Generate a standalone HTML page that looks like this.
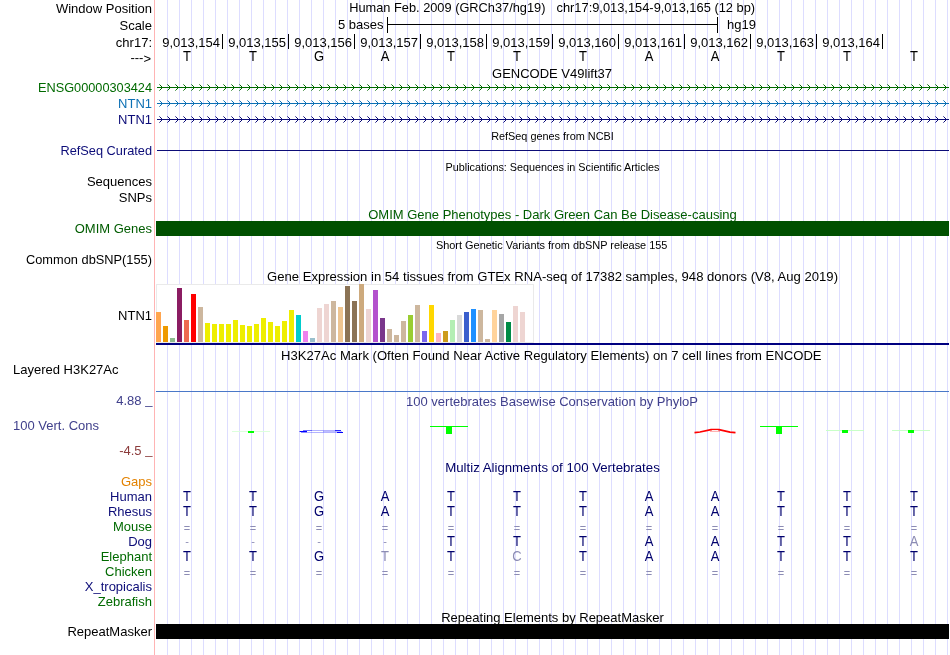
<!DOCTYPE html>
<html><head><meta charset="utf-8"><style>html,body{margin:0;padding:0;background:#fff;overflow:hidden}svg{display:block;will-change:transform}text{font-family:"Liberation Sans",sans-serif}</style></head>
<body><svg width="950" height="655" viewBox="0 0 950 655" font-family="Liberation Sans, sans-serif"><rect x="0" y="0" width="950" height="655" fill="#fff" />
<rect x="167" y="0" width="1" height="655" fill="#DDDDFF" />
<rect x="179" y="0" width="1" height="655" fill="#DDDDFF" />
<rect x="191" y="0" width="1" height="655" fill="#DDDDFF" />
<rect x="203" y="0" width="1" height="655" fill="#DDDDFF" />
<rect x="215" y="0" width="1" height="655" fill="#DDDDFF" />
<rect x="227" y="0" width="1" height="655" fill="#DDDDFF" />
<rect x="239" y="0" width="1" height="655" fill="#DDDDFF" />
<rect x="251" y="0" width="1" height="655" fill="#DDDDFF" />
<rect x="263" y="0" width="1" height="655" fill="#DDDDFF" />
<rect x="275" y="0" width="1" height="655" fill="#DDDDFF" />
<rect x="287" y="0" width="1" height="655" fill="#DDDDFF" />
<rect x="299" y="0" width="1" height="655" fill="#DDDDFF" />
<rect x="311" y="0" width="1" height="655" fill="#DDDDFF" />
<rect x="323" y="0" width="1" height="655" fill="#DDDDFF" />
<rect x="335" y="0" width="1" height="655" fill="#DDDDFF" />
<rect x="347" y="0" width="1" height="655" fill="#DDDDFF" />
<rect x="359" y="0" width="1" height="655" fill="#DDDDFF" />
<rect x="371" y="0" width="1" height="655" fill="#DDDDFF" />
<rect x="383" y="0" width="1" height="655" fill="#DDDDFF" />
<rect x="395" y="0" width="1" height="655" fill="#DDDDFF" />
<rect x="407" y="0" width="1" height="655" fill="#DDDDFF" />
<rect x="419" y="0" width="1" height="655" fill="#DDDDFF" />
<rect x="431" y="0" width="1" height="655" fill="#DDDDFF" />
<rect x="443" y="0" width="1" height="655" fill="#DDDDFF" />
<rect x="455" y="0" width="1" height="655" fill="#DDDDFF" />
<rect x="467" y="0" width="1" height="655" fill="#DDDDFF" />
<rect x="479" y="0" width="1" height="655" fill="#DDDDFF" />
<rect x="491" y="0" width="1" height="655" fill="#DDDDFF" />
<rect x="503" y="0" width="1" height="655" fill="#DDDDFF" />
<rect x="515" y="0" width="1" height="655" fill="#DDDDFF" />
<rect x="527" y="0" width="1" height="655" fill="#DDDDFF" />
<rect x="539" y="0" width="1" height="655" fill="#DDDDFF" />
<rect x="551" y="0" width="1" height="655" fill="#DDDDFF" />
<rect x="563" y="0" width="1" height="655" fill="#DDDDFF" />
<rect x="575" y="0" width="1" height="655" fill="#DDDDFF" />
<rect x="587" y="0" width="1" height="655" fill="#DDDDFF" />
<rect x="599" y="0" width="1" height="655" fill="#DDDDFF" />
<rect x="611" y="0" width="1" height="655" fill="#DDDDFF" />
<rect x="623" y="0" width="1" height="655" fill="#DDDDFF" />
<rect x="635" y="0" width="1" height="655" fill="#DDDDFF" />
<rect x="647" y="0" width="1" height="655" fill="#DDDDFF" />
<rect x="659" y="0" width="1" height="655" fill="#DDDDFF" />
<rect x="671" y="0" width="1" height="655" fill="#DDDDFF" />
<rect x="683" y="0" width="1" height="655" fill="#DDDDFF" />
<rect x="695" y="0" width="1" height="655" fill="#DDDDFF" />
<rect x="707" y="0" width="1" height="655" fill="#DDDDFF" />
<rect x="719" y="0" width="1" height="655" fill="#DDDDFF" />
<rect x="731" y="0" width="1" height="655" fill="#DDDDFF" />
<rect x="743" y="0" width="1" height="655" fill="#DDDDFF" />
<rect x="755" y="0" width="1" height="655" fill="#DDDDFF" />
<rect x="767" y="0" width="1" height="655" fill="#DDDDFF" />
<rect x="779" y="0" width="1" height="655" fill="#DDDDFF" />
<rect x="791" y="0" width="1" height="655" fill="#DDDDFF" />
<rect x="803" y="0" width="1" height="655" fill="#DDDDFF" />
<rect x="815" y="0" width="1" height="655" fill="#DDDDFF" />
<rect x="827" y="0" width="1" height="655" fill="#DDDDFF" />
<rect x="839" y="0" width="1" height="655" fill="#DDDDFF" />
<rect x="851" y="0" width="1" height="655" fill="#DDDDFF" />
<rect x="863" y="0" width="1" height="655" fill="#DDDDFF" />
<rect x="875" y="0" width="1" height="655" fill="#DDDDFF" />
<rect x="887" y="0" width="1" height="655" fill="#DDDDFF" />
<rect x="899" y="0" width="1" height="655" fill="#DDDDFF" />
<rect x="911" y="0" width="1" height="655" fill="#DDDDFF" />
<rect x="923" y="0" width="1" height="655" fill="#DDDDFF" />
<rect x="935" y="0" width="1" height="655" fill="#DDDDFF" />
<rect x="947" y="0" width="1" height="655" fill="#DDDDFF" />
<rect x="154" y="0" width="1" height="655" fill="#FFB4B4" />
<text x="152" y="13" font-size="13" fill="#000" text-anchor="end" >Window Position</text>
<text x="152" y="30" font-size="13" fill="#000" text-anchor="end" >Scale</text>
<text x="152" y="47" font-size="13" fill="#000" text-anchor="end" >chr17:</text>
<text x="151" y="62.5" font-size="13" text-anchor="end"><tspan dy="-1">---</tspan><tspan dy="1">&gt;</tspan></text>
<text x="349.2" y="12" font-size="13" fill="#000" text-anchor="start" textLength="196.3" lengthAdjust="spacingAndGlyphs" >Human Feb. 2009 (GRCh37/hg19)</text>
<text x="556.5" y="12" font-size="13" fill="#000" text-anchor="start" textLength="198.6" lengthAdjust="spacingAndGlyphs" >chr17:9,013,154-9,013,165 (12 bp)</text>
<text x="383.5" y="29" font-size="13" fill="#000" text-anchor="end" >5 bases</text>
<rect x="387" y="17" width="1" height="16" fill="#000" />
<rect x="717" y="17" width="1" height="16" fill="#000" />
<rect x="387" y="24" width="331" height="1" fill="#000" />
<text x="727" y="29" font-size="13" fill="#000" text-anchor="start" >hg19</text>
<rect x="222" y="34" width="1" height="15" fill="#000" />
<text x="220" y="47" font-size="13" fill="#000" text-anchor="end" >9,013,154</text>
<rect x="288" y="34" width="1" height="15" fill="#000" />
<text x="286" y="47" font-size="13" fill="#000" text-anchor="end" >9,013,155</text>
<rect x="354" y="34" width="1" height="15" fill="#000" />
<text x="352" y="47" font-size="13" fill="#000" text-anchor="end" >9,013,156</text>
<rect x="420" y="34" width="1" height="15" fill="#000" />
<text x="418" y="47" font-size="13" fill="#000" text-anchor="end" >9,013,157</text>
<rect x="486" y="34" width="1" height="15" fill="#000" />
<text x="484" y="47" font-size="13" fill="#000" text-anchor="end" >9,013,158</text>
<rect x="552" y="34" width="1" height="15" fill="#000" />
<text x="550" y="47" font-size="13" fill="#000" text-anchor="end" >9,013,159</text>
<rect x="618" y="34" width="1" height="15" fill="#000" />
<text x="616" y="47" font-size="13" fill="#000" text-anchor="end" >9,013,160</text>
<rect x="684" y="34" width="1" height="15" fill="#000" />
<text x="682" y="47" font-size="13" fill="#000" text-anchor="end" >9,013,161</text>
<rect x="750" y="34" width="1" height="15" fill="#000" />
<text x="748" y="47" font-size="13" fill="#000" text-anchor="end" >9,013,162</text>
<rect x="816" y="34" width="1" height="15" fill="#000" />
<text x="814" y="47" font-size="13" fill="#000" text-anchor="end" >9,013,163</text>
<rect x="882" y="34" width="1" height="15" fill="#000" />
<text x="880" y="47" font-size="13" fill="#000" text-anchor="end" >9,013,164</text>
<text x="187" y="61" font-size="13" fill="#000" text-anchor="middle" transform="matrix(1 0 0 1.08 0 -4.880)" >T</text>
<text x="253" y="61" font-size="13" fill="#000" text-anchor="middle" transform="matrix(1 0 0 1.08 0 -4.880)" >T</text>
<text x="319" y="61" font-size="13" fill="#000" text-anchor="middle" transform="matrix(1 0 0 1.08 0 -4.880)" >G</text>
<text x="385" y="61" font-size="13" fill="#000" text-anchor="middle" transform="matrix(1 0 0 1.08 0 -4.880)" >A</text>
<text x="451" y="61" font-size="13" fill="#000" text-anchor="middle" transform="matrix(1 0 0 1.08 0 -4.880)" >T</text>
<text x="517" y="61" font-size="13" fill="#000" text-anchor="middle" transform="matrix(1 0 0 1.08 0 -4.880)" >T</text>
<text x="583" y="61" font-size="13" fill="#000" text-anchor="middle" transform="matrix(1 0 0 1.08 0 -4.880)" >T</text>
<text x="649" y="61" font-size="13" fill="#000" text-anchor="middle" transform="matrix(1 0 0 1.08 0 -4.880)" >A</text>
<text x="715" y="61" font-size="13" fill="#000" text-anchor="middle" transform="matrix(1 0 0 1.08 0 -4.880)" >A</text>
<text x="781" y="61" font-size="13" fill="#000" text-anchor="middle" transform="matrix(1 0 0 1.08 0 -4.880)" >T</text>
<text x="847" y="61" font-size="13" fill="#000" text-anchor="middle" transform="matrix(1 0 0 1.08 0 -4.880)" >T</text>
<text x="914" y="61" font-size="13" fill="#000" text-anchor="middle" transform="matrix(1 0 0 1.08 0 -4.880)" >T</text>
<text x="552.0" y="78" font-size="13" fill="#000" text-anchor="middle" >GENCODE V49lift37</text>
<text x="152" y="92" font-size="13" fill="#006a00" text-anchor="end" textLength="114" lengthAdjust="spacingAndGlyphs" >ENSG00000303424</text>
<rect x="157" y="87" width="792" height="1" fill="#006a00" />
<path d="M160,85h1v1h-1zM161,86h1v3h-1zM160,89h1v1h-1zM168,85h1v1h-1zM169,86h1v3h-1zM168,89h1v1h-1zM176,85h1v1h-1zM177,86h1v3h-1zM176,89h1v1h-1zM184,85h1v1h-1zM185,86h1v3h-1zM184,89h1v1h-1zM192,85h1v1h-1zM193,86h1v3h-1zM192,89h1v1h-1zM200,85h1v1h-1zM201,86h1v3h-1zM200,89h1v1h-1zM208,85h1v1h-1zM209,86h1v3h-1zM208,89h1v1h-1zM216,85h1v1h-1zM217,86h1v3h-1zM216,89h1v1h-1zM224,85h1v1h-1zM225,86h1v3h-1zM224,89h1v1h-1zM232,85h1v1h-1zM233,86h1v3h-1zM232,89h1v1h-1zM240,85h1v1h-1zM241,86h1v3h-1zM240,89h1v1h-1zM248,85h1v1h-1zM249,86h1v3h-1zM248,89h1v1h-1zM256,85h1v1h-1zM257,86h1v3h-1zM256,89h1v1h-1zM264,85h1v1h-1zM265,86h1v3h-1zM264,89h1v1h-1zM272,85h1v1h-1zM273,86h1v3h-1zM272,89h1v1h-1zM280,85h1v1h-1zM281,86h1v3h-1zM280,89h1v1h-1zM288,85h1v1h-1zM289,86h1v3h-1zM288,89h1v1h-1zM296,85h1v1h-1zM297,86h1v3h-1zM296,89h1v1h-1zM304,85h1v1h-1zM305,86h1v3h-1zM304,89h1v1h-1zM312,85h1v1h-1zM313,86h1v3h-1zM312,89h1v1h-1zM320,85h1v1h-1zM321,86h1v3h-1zM320,89h1v1h-1zM328,85h1v1h-1zM329,86h1v3h-1zM328,89h1v1h-1zM336,85h1v1h-1zM337,86h1v3h-1zM336,89h1v1h-1zM344,85h1v1h-1zM345,86h1v3h-1zM344,89h1v1h-1zM352,85h1v1h-1zM353,86h1v3h-1zM352,89h1v1h-1zM360,85h1v1h-1zM361,86h1v3h-1zM360,89h1v1h-1zM368,85h1v1h-1zM369,86h1v3h-1zM368,89h1v1h-1zM376,85h1v1h-1zM377,86h1v3h-1zM376,89h1v1h-1zM384,85h1v1h-1zM385,86h1v3h-1zM384,89h1v1h-1zM392,85h1v1h-1zM393,86h1v3h-1zM392,89h1v1h-1zM400,85h1v1h-1zM401,86h1v3h-1zM400,89h1v1h-1zM408,85h1v1h-1zM409,86h1v3h-1zM408,89h1v1h-1zM416,85h1v1h-1zM417,86h1v3h-1zM416,89h1v1h-1zM424,85h1v1h-1zM425,86h1v3h-1zM424,89h1v1h-1zM432,85h1v1h-1zM433,86h1v3h-1zM432,89h1v1h-1zM440,85h1v1h-1zM441,86h1v3h-1zM440,89h1v1h-1zM448,85h1v1h-1zM449,86h1v3h-1zM448,89h1v1h-1zM456,85h1v1h-1zM457,86h1v3h-1zM456,89h1v1h-1zM464,85h1v1h-1zM465,86h1v3h-1zM464,89h1v1h-1zM472,85h1v1h-1zM473,86h1v3h-1zM472,89h1v1h-1zM480,85h1v1h-1zM481,86h1v3h-1zM480,89h1v1h-1zM488,85h1v1h-1zM489,86h1v3h-1zM488,89h1v1h-1zM496,85h1v1h-1zM497,86h1v3h-1zM496,89h1v1h-1zM504,85h1v1h-1zM505,86h1v3h-1zM504,89h1v1h-1zM512,85h1v1h-1zM513,86h1v3h-1zM512,89h1v1h-1zM520,85h1v1h-1zM521,86h1v3h-1zM520,89h1v1h-1zM528,85h1v1h-1zM529,86h1v3h-1zM528,89h1v1h-1zM536,85h1v1h-1zM537,86h1v3h-1zM536,89h1v1h-1zM544,85h1v1h-1zM545,86h1v3h-1zM544,89h1v1h-1zM552,85h1v1h-1zM553,86h1v3h-1zM552,89h1v1h-1zM560,85h1v1h-1zM561,86h1v3h-1zM560,89h1v1h-1zM568,85h1v1h-1zM569,86h1v3h-1zM568,89h1v1h-1zM576,85h1v1h-1zM577,86h1v3h-1zM576,89h1v1h-1zM584,85h1v1h-1zM585,86h1v3h-1zM584,89h1v1h-1zM592,85h1v1h-1zM593,86h1v3h-1zM592,89h1v1h-1zM600,85h1v1h-1zM601,86h1v3h-1zM600,89h1v1h-1zM608,85h1v1h-1zM609,86h1v3h-1zM608,89h1v1h-1zM616,85h1v1h-1zM617,86h1v3h-1zM616,89h1v1h-1zM624,85h1v1h-1zM625,86h1v3h-1zM624,89h1v1h-1zM632,85h1v1h-1zM633,86h1v3h-1zM632,89h1v1h-1zM640,85h1v1h-1zM641,86h1v3h-1zM640,89h1v1h-1zM648,85h1v1h-1zM649,86h1v3h-1zM648,89h1v1h-1zM656,85h1v1h-1zM657,86h1v3h-1zM656,89h1v1h-1zM664,85h1v1h-1zM665,86h1v3h-1zM664,89h1v1h-1zM672,85h1v1h-1zM673,86h1v3h-1zM672,89h1v1h-1zM680,85h1v1h-1zM681,86h1v3h-1zM680,89h1v1h-1zM688,85h1v1h-1zM689,86h1v3h-1zM688,89h1v1h-1zM696,85h1v1h-1zM697,86h1v3h-1zM696,89h1v1h-1zM704,85h1v1h-1zM705,86h1v3h-1zM704,89h1v1h-1zM712,85h1v1h-1zM713,86h1v3h-1zM712,89h1v1h-1zM720,85h1v1h-1zM721,86h1v3h-1zM720,89h1v1h-1zM728,85h1v1h-1zM729,86h1v3h-1zM728,89h1v1h-1zM736,85h1v1h-1zM737,86h1v3h-1zM736,89h1v1h-1zM744,85h1v1h-1zM745,86h1v3h-1zM744,89h1v1h-1zM752,85h1v1h-1zM753,86h1v3h-1zM752,89h1v1h-1zM760,85h1v1h-1zM761,86h1v3h-1zM760,89h1v1h-1zM768,85h1v1h-1zM769,86h1v3h-1zM768,89h1v1h-1zM776,85h1v1h-1zM777,86h1v3h-1zM776,89h1v1h-1zM784,85h1v1h-1zM785,86h1v3h-1zM784,89h1v1h-1zM792,85h1v1h-1zM793,86h1v3h-1zM792,89h1v1h-1zM800,85h1v1h-1zM801,86h1v3h-1zM800,89h1v1h-1zM808,85h1v1h-1zM809,86h1v3h-1zM808,89h1v1h-1zM816,85h1v1h-1zM817,86h1v3h-1zM816,89h1v1h-1zM824,85h1v1h-1zM825,86h1v3h-1zM824,89h1v1h-1zM832,85h1v1h-1zM833,86h1v3h-1zM832,89h1v1h-1zM840,85h1v1h-1zM841,86h1v3h-1zM840,89h1v1h-1zM848,85h1v1h-1zM849,86h1v3h-1zM848,89h1v1h-1zM856,85h1v1h-1zM857,86h1v3h-1zM856,89h1v1h-1zM864,85h1v1h-1zM865,86h1v3h-1zM864,89h1v1h-1zM872,85h1v1h-1zM873,86h1v3h-1zM872,89h1v1h-1zM880,85h1v1h-1zM881,86h1v3h-1zM880,89h1v1h-1zM888,85h1v1h-1zM889,86h1v3h-1zM888,89h1v1h-1zM896,85h1v1h-1zM897,86h1v3h-1zM896,89h1v1h-1zM904,85h1v1h-1zM905,86h1v3h-1zM904,89h1v1h-1zM912,85h1v1h-1zM913,86h1v3h-1zM912,89h1v1h-1zM920,85h1v1h-1zM921,86h1v3h-1zM920,89h1v1h-1zM928,85h1v1h-1zM929,86h1v3h-1zM928,89h1v1h-1zM936,85h1v1h-1zM937,86h1v3h-1zM936,89h1v1h-1zM944,85h1v1h-1zM945,86h1v3h-1zM944,89h1v1h-1z" fill="#006a00"/>
<path d="M159,84h1v1h-1zM159,90h1v1h-1zM167,84h1v1h-1zM167,90h1v1h-1zM175,84h1v1h-1zM175,90h1v1h-1zM183,84h1v1h-1zM183,90h1v1h-1zM191,84h1v1h-1zM191,90h1v1h-1zM199,84h1v1h-1zM199,90h1v1h-1zM207,84h1v1h-1zM207,90h1v1h-1zM215,84h1v1h-1zM215,90h1v1h-1zM223,84h1v1h-1zM223,90h1v1h-1zM231,84h1v1h-1zM231,90h1v1h-1zM239,84h1v1h-1zM239,90h1v1h-1zM247,84h1v1h-1zM247,90h1v1h-1zM255,84h1v1h-1zM255,90h1v1h-1zM263,84h1v1h-1zM263,90h1v1h-1zM271,84h1v1h-1zM271,90h1v1h-1zM279,84h1v1h-1zM279,90h1v1h-1zM287,84h1v1h-1zM287,90h1v1h-1zM295,84h1v1h-1zM295,90h1v1h-1zM303,84h1v1h-1zM303,90h1v1h-1zM311,84h1v1h-1zM311,90h1v1h-1zM319,84h1v1h-1zM319,90h1v1h-1zM327,84h1v1h-1zM327,90h1v1h-1zM335,84h1v1h-1zM335,90h1v1h-1zM343,84h1v1h-1zM343,90h1v1h-1zM351,84h1v1h-1zM351,90h1v1h-1zM359,84h1v1h-1zM359,90h1v1h-1zM367,84h1v1h-1zM367,90h1v1h-1zM375,84h1v1h-1zM375,90h1v1h-1zM383,84h1v1h-1zM383,90h1v1h-1zM391,84h1v1h-1zM391,90h1v1h-1zM399,84h1v1h-1zM399,90h1v1h-1zM407,84h1v1h-1zM407,90h1v1h-1zM415,84h1v1h-1zM415,90h1v1h-1zM423,84h1v1h-1zM423,90h1v1h-1zM431,84h1v1h-1zM431,90h1v1h-1zM439,84h1v1h-1zM439,90h1v1h-1zM447,84h1v1h-1zM447,90h1v1h-1zM455,84h1v1h-1zM455,90h1v1h-1zM463,84h1v1h-1zM463,90h1v1h-1zM471,84h1v1h-1zM471,90h1v1h-1zM479,84h1v1h-1zM479,90h1v1h-1zM487,84h1v1h-1zM487,90h1v1h-1zM495,84h1v1h-1zM495,90h1v1h-1zM503,84h1v1h-1zM503,90h1v1h-1zM511,84h1v1h-1zM511,90h1v1h-1zM519,84h1v1h-1zM519,90h1v1h-1zM527,84h1v1h-1zM527,90h1v1h-1zM535,84h1v1h-1zM535,90h1v1h-1zM543,84h1v1h-1zM543,90h1v1h-1zM551,84h1v1h-1zM551,90h1v1h-1zM559,84h1v1h-1zM559,90h1v1h-1zM567,84h1v1h-1zM567,90h1v1h-1zM575,84h1v1h-1zM575,90h1v1h-1zM583,84h1v1h-1zM583,90h1v1h-1zM591,84h1v1h-1zM591,90h1v1h-1zM599,84h1v1h-1zM599,90h1v1h-1zM607,84h1v1h-1zM607,90h1v1h-1zM615,84h1v1h-1zM615,90h1v1h-1zM623,84h1v1h-1zM623,90h1v1h-1zM631,84h1v1h-1zM631,90h1v1h-1zM639,84h1v1h-1zM639,90h1v1h-1zM647,84h1v1h-1zM647,90h1v1h-1zM655,84h1v1h-1zM655,90h1v1h-1zM663,84h1v1h-1zM663,90h1v1h-1zM671,84h1v1h-1zM671,90h1v1h-1zM679,84h1v1h-1zM679,90h1v1h-1zM687,84h1v1h-1zM687,90h1v1h-1zM695,84h1v1h-1zM695,90h1v1h-1zM703,84h1v1h-1zM703,90h1v1h-1zM711,84h1v1h-1zM711,90h1v1h-1zM719,84h1v1h-1zM719,90h1v1h-1zM727,84h1v1h-1zM727,90h1v1h-1zM735,84h1v1h-1zM735,90h1v1h-1zM743,84h1v1h-1zM743,90h1v1h-1zM751,84h1v1h-1zM751,90h1v1h-1zM759,84h1v1h-1zM759,90h1v1h-1zM767,84h1v1h-1zM767,90h1v1h-1zM775,84h1v1h-1zM775,90h1v1h-1zM783,84h1v1h-1zM783,90h1v1h-1zM791,84h1v1h-1zM791,90h1v1h-1zM799,84h1v1h-1zM799,90h1v1h-1zM807,84h1v1h-1zM807,90h1v1h-1zM815,84h1v1h-1zM815,90h1v1h-1zM823,84h1v1h-1zM823,90h1v1h-1zM831,84h1v1h-1zM831,90h1v1h-1zM839,84h1v1h-1zM839,90h1v1h-1zM847,84h1v1h-1zM847,90h1v1h-1zM855,84h1v1h-1zM855,90h1v1h-1zM863,84h1v1h-1zM863,90h1v1h-1zM871,84h1v1h-1zM871,90h1v1h-1zM879,84h1v1h-1zM879,90h1v1h-1zM887,84h1v1h-1zM887,90h1v1h-1zM895,84h1v1h-1zM895,90h1v1h-1zM903,84h1v1h-1zM903,90h1v1h-1zM911,84h1v1h-1zM911,90h1v1h-1zM919,84h1v1h-1zM919,90h1v1h-1zM927,84h1v1h-1zM927,90h1v1h-1zM935,84h1v1h-1zM935,90h1v1h-1zM943,84h1v1h-1zM943,90h1v1h-1z" fill="#006a00" opacity="0.6"/>
<text x="152" y="108" font-size="13" fill="#0c70b4" text-anchor="end" >NTN1</text>
<rect x="157" y="103" width="792" height="1" fill="#0c70b4" />
<path d="M160,101h1v1h-1zM161,102h1v3h-1zM160,105h1v1h-1zM168,101h1v1h-1zM169,102h1v3h-1zM168,105h1v1h-1zM176,101h1v1h-1zM177,102h1v3h-1zM176,105h1v1h-1zM184,101h1v1h-1zM185,102h1v3h-1zM184,105h1v1h-1zM192,101h1v1h-1zM193,102h1v3h-1zM192,105h1v1h-1zM200,101h1v1h-1zM201,102h1v3h-1zM200,105h1v1h-1zM208,101h1v1h-1zM209,102h1v3h-1zM208,105h1v1h-1zM216,101h1v1h-1zM217,102h1v3h-1zM216,105h1v1h-1zM224,101h1v1h-1zM225,102h1v3h-1zM224,105h1v1h-1zM232,101h1v1h-1zM233,102h1v3h-1zM232,105h1v1h-1zM240,101h1v1h-1zM241,102h1v3h-1zM240,105h1v1h-1zM248,101h1v1h-1zM249,102h1v3h-1zM248,105h1v1h-1zM256,101h1v1h-1zM257,102h1v3h-1zM256,105h1v1h-1zM264,101h1v1h-1zM265,102h1v3h-1zM264,105h1v1h-1zM272,101h1v1h-1zM273,102h1v3h-1zM272,105h1v1h-1zM280,101h1v1h-1zM281,102h1v3h-1zM280,105h1v1h-1zM288,101h1v1h-1zM289,102h1v3h-1zM288,105h1v1h-1zM296,101h1v1h-1zM297,102h1v3h-1zM296,105h1v1h-1zM304,101h1v1h-1zM305,102h1v3h-1zM304,105h1v1h-1zM312,101h1v1h-1zM313,102h1v3h-1zM312,105h1v1h-1zM320,101h1v1h-1zM321,102h1v3h-1zM320,105h1v1h-1zM328,101h1v1h-1zM329,102h1v3h-1zM328,105h1v1h-1zM336,101h1v1h-1zM337,102h1v3h-1zM336,105h1v1h-1zM344,101h1v1h-1zM345,102h1v3h-1zM344,105h1v1h-1zM352,101h1v1h-1zM353,102h1v3h-1zM352,105h1v1h-1zM360,101h1v1h-1zM361,102h1v3h-1zM360,105h1v1h-1zM368,101h1v1h-1zM369,102h1v3h-1zM368,105h1v1h-1zM376,101h1v1h-1zM377,102h1v3h-1zM376,105h1v1h-1zM384,101h1v1h-1zM385,102h1v3h-1zM384,105h1v1h-1zM392,101h1v1h-1zM393,102h1v3h-1zM392,105h1v1h-1zM400,101h1v1h-1zM401,102h1v3h-1zM400,105h1v1h-1zM408,101h1v1h-1zM409,102h1v3h-1zM408,105h1v1h-1zM416,101h1v1h-1zM417,102h1v3h-1zM416,105h1v1h-1zM424,101h1v1h-1zM425,102h1v3h-1zM424,105h1v1h-1zM432,101h1v1h-1zM433,102h1v3h-1zM432,105h1v1h-1zM440,101h1v1h-1zM441,102h1v3h-1zM440,105h1v1h-1zM448,101h1v1h-1zM449,102h1v3h-1zM448,105h1v1h-1zM456,101h1v1h-1zM457,102h1v3h-1zM456,105h1v1h-1zM464,101h1v1h-1zM465,102h1v3h-1zM464,105h1v1h-1zM472,101h1v1h-1zM473,102h1v3h-1zM472,105h1v1h-1zM480,101h1v1h-1zM481,102h1v3h-1zM480,105h1v1h-1zM488,101h1v1h-1zM489,102h1v3h-1zM488,105h1v1h-1zM496,101h1v1h-1zM497,102h1v3h-1zM496,105h1v1h-1zM504,101h1v1h-1zM505,102h1v3h-1zM504,105h1v1h-1zM512,101h1v1h-1zM513,102h1v3h-1zM512,105h1v1h-1zM520,101h1v1h-1zM521,102h1v3h-1zM520,105h1v1h-1zM528,101h1v1h-1zM529,102h1v3h-1zM528,105h1v1h-1zM536,101h1v1h-1zM537,102h1v3h-1zM536,105h1v1h-1zM544,101h1v1h-1zM545,102h1v3h-1zM544,105h1v1h-1zM552,101h1v1h-1zM553,102h1v3h-1zM552,105h1v1h-1zM560,101h1v1h-1zM561,102h1v3h-1zM560,105h1v1h-1zM568,101h1v1h-1zM569,102h1v3h-1zM568,105h1v1h-1zM576,101h1v1h-1zM577,102h1v3h-1zM576,105h1v1h-1zM584,101h1v1h-1zM585,102h1v3h-1zM584,105h1v1h-1zM592,101h1v1h-1zM593,102h1v3h-1zM592,105h1v1h-1zM600,101h1v1h-1zM601,102h1v3h-1zM600,105h1v1h-1zM608,101h1v1h-1zM609,102h1v3h-1zM608,105h1v1h-1zM616,101h1v1h-1zM617,102h1v3h-1zM616,105h1v1h-1zM624,101h1v1h-1zM625,102h1v3h-1zM624,105h1v1h-1zM632,101h1v1h-1zM633,102h1v3h-1zM632,105h1v1h-1zM640,101h1v1h-1zM641,102h1v3h-1zM640,105h1v1h-1zM648,101h1v1h-1zM649,102h1v3h-1zM648,105h1v1h-1zM656,101h1v1h-1zM657,102h1v3h-1zM656,105h1v1h-1zM664,101h1v1h-1zM665,102h1v3h-1zM664,105h1v1h-1zM672,101h1v1h-1zM673,102h1v3h-1zM672,105h1v1h-1zM680,101h1v1h-1zM681,102h1v3h-1zM680,105h1v1h-1zM688,101h1v1h-1zM689,102h1v3h-1zM688,105h1v1h-1zM696,101h1v1h-1zM697,102h1v3h-1zM696,105h1v1h-1zM704,101h1v1h-1zM705,102h1v3h-1zM704,105h1v1h-1zM712,101h1v1h-1zM713,102h1v3h-1zM712,105h1v1h-1zM720,101h1v1h-1zM721,102h1v3h-1zM720,105h1v1h-1zM728,101h1v1h-1zM729,102h1v3h-1zM728,105h1v1h-1zM736,101h1v1h-1zM737,102h1v3h-1zM736,105h1v1h-1zM744,101h1v1h-1zM745,102h1v3h-1zM744,105h1v1h-1zM752,101h1v1h-1zM753,102h1v3h-1zM752,105h1v1h-1zM760,101h1v1h-1zM761,102h1v3h-1zM760,105h1v1h-1zM768,101h1v1h-1zM769,102h1v3h-1zM768,105h1v1h-1zM776,101h1v1h-1zM777,102h1v3h-1zM776,105h1v1h-1zM784,101h1v1h-1zM785,102h1v3h-1zM784,105h1v1h-1zM792,101h1v1h-1zM793,102h1v3h-1zM792,105h1v1h-1zM800,101h1v1h-1zM801,102h1v3h-1zM800,105h1v1h-1zM808,101h1v1h-1zM809,102h1v3h-1zM808,105h1v1h-1zM816,101h1v1h-1zM817,102h1v3h-1zM816,105h1v1h-1zM824,101h1v1h-1zM825,102h1v3h-1zM824,105h1v1h-1zM832,101h1v1h-1zM833,102h1v3h-1zM832,105h1v1h-1zM840,101h1v1h-1zM841,102h1v3h-1zM840,105h1v1h-1zM848,101h1v1h-1zM849,102h1v3h-1zM848,105h1v1h-1zM856,101h1v1h-1zM857,102h1v3h-1zM856,105h1v1h-1zM864,101h1v1h-1zM865,102h1v3h-1zM864,105h1v1h-1zM872,101h1v1h-1zM873,102h1v3h-1zM872,105h1v1h-1zM880,101h1v1h-1zM881,102h1v3h-1zM880,105h1v1h-1zM888,101h1v1h-1zM889,102h1v3h-1zM888,105h1v1h-1zM896,101h1v1h-1zM897,102h1v3h-1zM896,105h1v1h-1zM904,101h1v1h-1zM905,102h1v3h-1zM904,105h1v1h-1zM912,101h1v1h-1zM913,102h1v3h-1zM912,105h1v1h-1zM920,101h1v1h-1zM921,102h1v3h-1zM920,105h1v1h-1zM928,101h1v1h-1zM929,102h1v3h-1zM928,105h1v1h-1zM936,101h1v1h-1zM937,102h1v3h-1zM936,105h1v1h-1zM944,101h1v1h-1zM945,102h1v3h-1zM944,105h1v1h-1z" fill="#0c70b4"/>
<path d="M159,100h1v1h-1zM159,106h1v1h-1zM167,100h1v1h-1zM167,106h1v1h-1zM175,100h1v1h-1zM175,106h1v1h-1zM183,100h1v1h-1zM183,106h1v1h-1zM191,100h1v1h-1zM191,106h1v1h-1zM199,100h1v1h-1zM199,106h1v1h-1zM207,100h1v1h-1zM207,106h1v1h-1zM215,100h1v1h-1zM215,106h1v1h-1zM223,100h1v1h-1zM223,106h1v1h-1zM231,100h1v1h-1zM231,106h1v1h-1zM239,100h1v1h-1zM239,106h1v1h-1zM247,100h1v1h-1zM247,106h1v1h-1zM255,100h1v1h-1zM255,106h1v1h-1zM263,100h1v1h-1zM263,106h1v1h-1zM271,100h1v1h-1zM271,106h1v1h-1zM279,100h1v1h-1zM279,106h1v1h-1zM287,100h1v1h-1zM287,106h1v1h-1zM295,100h1v1h-1zM295,106h1v1h-1zM303,100h1v1h-1zM303,106h1v1h-1zM311,100h1v1h-1zM311,106h1v1h-1zM319,100h1v1h-1zM319,106h1v1h-1zM327,100h1v1h-1zM327,106h1v1h-1zM335,100h1v1h-1zM335,106h1v1h-1zM343,100h1v1h-1zM343,106h1v1h-1zM351,100h1v1h-1zM351,106h1v1h-1zM359,100h1v1h-1zM359,106h1v1h-1zM367,100h1v1h-1zM367,106h1v1h-1zM375,100h1v1h-1zM375,106h1v1h-1zM383,100h1v1h-1zM383,106h1v1h-1zM391,100h1v1h-1zM391,106h1v1h-1zM399,100h1v1h-1zM399,106h1v1h-1zM407,100h1v1h-1zM407,106h1v1h-1zM415,100h1v1h-1zM415,106h1v1h-1zM423,100h1v1h-1zM423,106h1v1h-1zM431,100h1v1h-1zM431,106h1v1h-1zM439,100h1v1h-1zM439,106h1v1h-1zM447,100h1v1h-1zM447,106h1v1h-1zM455,100h1v1h-1zM455,106h1v1h-1zM463,100h1v1h-1zM463,106h1v1h-1zM471,100h1v1h-1zM471,106h1v1h-1zM479,100h1v1h-1zM479,106h1v1h-1zM487,100h1v1h-1zM487,106h1v1h-1zM495,100h1v1h-1zM495,106h1v1h-1zM503,100h1v1h-1zM503,106h1v1h-1zM511,100h1v1h-1zM511,106h1v1h-1zM519,100h1v1h-1zM519,106h1v1h-1zM527,100h1v1h-1zM527,106h1v1h-1zM535,100h1v1h-1zM535,106h1v1h-1zM543,100h1v1h-1zM543,106h1v1h-1zM551,100h1v1h-1zM551,106h1v1h-1zM559,100h1v1h-1zM559,106h1v1h-1zM567,100h1v1h-1zM567,106h1v1h-1zM575,100h1v1h-1zM575,106h1v1h-1zM583,100h1v1h-1zM583,106h1v1h-1zM591,100h1v1h-1zM591,106h1v1h-1zM599,100h1v1h-1zM599,106h1v1h-1zM607,100h1v1h-1zM607,106h1v1h-1zM615,100h1v1h-1zM615,106h1v1h-1zM623,100h1v1h-1zM623,106h1v1h-1zM631,100h1v1h-1zM631,106h1v1h-1zM639,100h1v1h-1zM639,106h1v1h-1zM647,100h1v1h-1zM647,106h1v1h-1zM655,100h1v1h-1zM655,106h1v1h-1zM663,100h1v1h-1zM663,106h1v1h-1zM671,100h1v1h-1zM671,106h1v1h-1zM679,100h1v1h-1zM679,106h1v1h-1zM687,100h1v1h-1zM687,106h1v1h-1zM695,100h1v1h-1zM695,106h1v1h-1zM703,100h1v1h-1zM703,106h1v1h-1zM711,100h1v1h-1zM711,106h1v1h-1zM719,100h1v1h-1zM719,106h1v1h-1zM727,100h1v1h-1zM727,106h1v1h-1zM735,100h1v1h-1zM735,106h1v1h-1zM743,100h1v1h-1zM743,106h1v1h-1zM751,100h1v1h-1zM751,106h1v1h-1zM759,100h1v1h-1zM759,106h1v1h-1zM767,100h1v1h-1zM767,106h1v1h-1zM775,100h1v1h-1zM775,106h1v1h-1zM783,100h1v1h-1zM783,106h1v1h-1zM791,100h1v1h-1zM791,106h1v1h-1zM799,100h1v1h-1zM799,106h1v1h-1zM807,100h1v1h-1zM807,106h1v1h-1zM815,100h1v1h-1zM815,106h1v1h-1zM823,100h1v1h-1zM823,106h1v1h-1zM831,100h1v1h-1zM831,106h1v1h-1zM839,100h1v1h-1zM839,106h1v1h-1zM847,100h1v1h-1zM847,106h1v1h-1zM855,100h1v1h-1zM855,106h1v1h-1zM863,100h1v1h-1zM863,106h1v1h-1zM871,100h1v1h-1zM871,106h1v1h-1zM879,100h1v1h-1zM879,106h1v1h-1zM887,100h1v1h-1zM887,106h1v1h-1zM895,100h1v1h-1zM895,106h1v1h-1zM903,100h1v1h-1zM903,106h1v1h-1zM911,100h1v1h-1zM911,106h1v1h-1zM919,100h1v1h-1zM919,106h1v1h-1zM927,100h1v1h-1zM927,106h1v1h-1zM935,100h1v1h-1zM935,106h1v1h-1zM943,100h1v1h-1zM943,106h1v1h-1z" fill="#0c70b4" opacity="0.6"/>
<text x="152" y="124" font-size="13" fill="#0c0c78" text-anchor="end" >NTN1</text>
<rect x="157" y="119" width="792" height="1" fill="#0c0c78" />
<path d="M160,117h1v1h-1zM161,118h1v3h-1zM160,121h1v1h-1zM168,117h1v1h-1zM169,118h1v3h-1zM168,121h1v1h-1zM176,117h1v1h-1zM177,118h1v3h-1zM176,121h1v1h-1zM184,117h1v1h-1zM185,118h1v3h-1zM184,121h1v1h-1zM192,117h1v1h-1zM193,118h1v3h-1zM192,121h1v1h-1zM200,117h1v1h-1zM201,118h1v3h-1zM200,121h1v1h-1zM208,117h1v1h-1zM209,118h1v3h-1zM208,121h1v1h-1zM216,117h1v1h-1zM217,118h1v3h-1zM216,121h1v1h-1zM224,117h1v1h-1zM225,118h1v3h-1zM224,121h1v1h-1zM232,117h1v1h-1zM233,118h1v3h-1zM232,121h1v1h-1zM240,117h1v1h-1zM241,118h1v3h-1zM240,121h1v1h-1zM248,117h1v1h-1zM249,118h1v3h-1zM248,121h1v1h-1zM256,117h1v1h-1zM257,118h1v3h-1zM256,121h1v1h-1zM264,117h1v1h-1zM265,118h1v3h-1zM264,121h1v1h-1zM272,117h1v1h-1zM273,118h1v3h-1zM272,121h1v1h-1zM280,117h1v1h-1zM281,118h1v3h-1zM280,121h1v1h-1zM288,117h1v1h-1zM289,118h1v3h-1zM288,121h1v1h-1zM296,117h1v1h-1zM297,118h1v3h-1zM296,121h1v1h-1zM304,117h1v1h-1zM305,118h1v3h-1zM304,121h1v1h-1zM312,117h1v1h-1zM313,118h1v3h-1zM312,121h1v1h-1zM320,117h1v1h-1zM321,118h1v3h-1zM320,121h1v1h-1zM328,117h1v1h-1zM329,118h1v3h-1zM328,121h1v1h-1zM336,117h1v1h-1zM337,118h1v3h-1zM336,121h1v1h-1zM344,117h1v1h-1zM345,118h1v3h-1zM344,121h1v1h-1zM352,117h1v1h-1zM353,118h1v3h-1zM352,121h1v1h-1zM360,117h1v1h-1zM361,118h1v3h-1zM360,121h1v1h-1zM368,117h1v1h-1zM369,118h1v3h-1zM368,121h1v1h-1zM376,117h1v1h-1zM377,118h1v3h-1zM376,121h1v1h-1zM384,117h1v1h-1zM385,118h1v3h-1zM384,121h1v1h-1zM392,117h1v1h-1zM393,118h1v3h-1zM392,121h1v1h-1zM400,117h1v1h-1zM401,118h1v3h-1zM400,121h1v1h-1zM408,117h1v1h-1zM409,118h1v3h-1zM408,121h1v1h-1zM416,117h1v1h-1zM417,118h1v3h-1zM416,121h1v1h-1zM424,117h1v1h-1zM425,118h1v3h-1zM424,121h1v1h-1zM432,117h1v1h-1zM433,118h1v3h-1zM432,121h1v1h-1zM440,117h1v1h-1zM441,118h1v3h-1zM440,121h1v1h-1zM448,117h1v1h-1zM449,118h1v3h-1zM448,121h1v1h-1zM456,117h1v1h-1zM457,118h1v3h-1zM456,121h1v1h-1zM464,117h1v1h-1zM465,118h1v3h-1zM464,121h1v1h-1zM472,117h1v1h-1zM473,118h1v3h-1zM472,121h1v1h-1zM480,117h1v1h-1zM481,118h1v3h-1zM480,121h1v1h-1zM488,117h1v1h-1zM489,118h1v3h-1zM488,121h1v1h-1zM496,117h1v1h-1zM497,118h1v3h-1zM496,121h1v1h-1zM504,117h1v1h-1zM505,118h1v3h-1zM504,121h1v1h-1zM512,117h1v1h-1zM513,118h1v3h-1zM512,121h1v1h-1zM520,117h1v1h-1zM521,118h1v3h-1zM520,121h1v1h-1zM528,117h1v1h-1zM529,118h1v3h-1zM528,121h1v1h-1zM536,117h1v1h-1zM537,118h1v3h-1zM536,121h1v1h-1zM544,117h1v1h-1zM545,118h1v3h-1zM544,121h1v1h-1zM552,117h1v1h-1zM553,118h1v3h-1zM552,121h1v1h-1zM560,117h1v1h-1zM561,118h1v3h-1zM560,121h1v1h-1zM568,117h1v1h-1zM569,118h1v3h-1zM568,121h1v1h-1zM576,117h1v1h-1zM577,118h1v3h-1zM576,121h1v1h-1zM584,117h1v1h-1zM585,118h1v3h-1zM584,121h1v1h-1zM592,117h1v1h-1zM593,118h1v3h-1zM592,121h1v1h-1zM600,117h1v1h-1zM601,118h1v3h-1zM600,121h1v1h-1zM608,117h1v1h-1zM609,118h1v3h-1zM608,121h1v1h-1zM616,117h1v1h-1zM617,118h1v3h-1zM616,121h1v1h-1zM624,117h1v1h-1zM625,118h1v3h-1zM624,121h1v1h-1zM632,117h1v1h-1zM633,118h1v3h-1zM632,121h1v1h-1zM640,117h1v1h-1zM641,118h1v3h-1zM640,121h1v1h-1zM648,117h1v1h-1zM649,118h1v3h-1zM648,121h1v1h-1zM656,117h1v1h-1zM657,118h1v3h-1zM656,121h1v1h-1zM664,117h1v1h-1zM665,118h1v3h-1zM664,121h1v1h-1zM672,117h1v1h-1zM673,118h1v3h-1zM672,121h1v1h-1zM680,117h1v1h-1zM681,118h1v3h-1zM680,121h1v1h-1zM688,117h1v1h-1zM689,118h1v3h-1zM688,121h1v1h-1zM696,117h1v1h-1zM697,118h1v3h-1zM696,121h1v1h-1zM704,117h1v1h-1zM705,118h1v3h-1zM704,121h1v1h-1zM712,117h1v1h-1zM713,118h1v3h-1zM712,121h1v1h-1zM720,117h1v1h-1zM721,118h1v3h-1zM720,121h1v1h-1zM728,117h1v1h-1zM729,118h1v3h-1zM728,121h1v1h-1zM736,117h1v1h-1zM737,118h1v3h-1zM736,121h1v1h-1zM744,117h1v1h-1zM745,118h1v3h-1zM744,121h1v1h-1zM752,117h1v1h-1zM753,118h1v3h-1zM752,121h1v1h-1zM760,117h1v1h-1zM761,118h1v3h-1zM760,121h1v1h-1zM768,117h1v1h-1zM769,118h1v3h-1zM768,121h1v1h-1zM776,117h1v1h-1zM777,118h1v3h-1zM776,121h1v1h-1zM784,117h1v1h-1zM785,118h1v3h-1zM784,121h1v1h-1zM792,117h1v1h-1zM793,118h1v3h-1zM792,121h1v1h-1zM800,117h1v1h-1zM801,118h1v3h-1zM800,121h1v1h-1zM808,117h1v1h-1zM809,118h1v3h-1zM808,121h1v1h-1zM816,117h1v1h-1zM817,118h1v3h-1zM816,121h1v1h-1zM824,117h1v1h-1zM825,118h1v3h-1zM824,121h1v1h-1zM832,117h1v1h-1zM833,118h1v3h-1zM832,121h1v1h-1zM840,117h1v1h-1zM841,118h1v3h-1zM840,121h1v1h-1zM848,117h1v1h-1zM849,118h1v3h-1zM848,121h1v1h-1zM856,117h1v1h-1zM857,118h1v3h-1zM856,121h1v1h-1zM864,117h1v1h-1zM865,118h1v3h-1zM864,121h1v1h-1zM872,117h1v1h-1zM873,118h1v3h-1zM872,121h1v1h-1zM880,117h1v1h-1zM881,118h1v3h-1zM880,121h1v1h-1zM888,117h1v1h-1zM889,118h1v3h-1zM888,121h1v1h-1zM896,117h1v1h-1zM897,118h1v3h-1zM896,121h1v1h-1zM904,117h1v1h-1zM905,118h1v3h-1zM904,121h1v1h-1zM912,117h1v1h-1zM913,118h1v3h-1zM912,121h1v1h-1zM920,117h1v1h-1zM921,118h1v3h-1zM920,121h1v1h-1zM928,117h1v1h-1zM929,118h1v3h-1zM928,121h1v1h-1zM936,117h1v1h-1zM937,118h1v3h-1zM936,121h1v1h-1zM944,117h1v1h-1zM945,118h1v3h-1zM944,121h1v1h-1z" fill="#0c0c78"/>
<path d="M159,116h1v1h-1zM159,122h1v1h-1zM167,116h1v1h-1zM167,122h1v1h-1zM175,116h1v1h-1zM175,122h1v1h-1zM183,116h1v1h-1zM183,122h1v1h-1zM191,116h1v1h-1zM191,122h1v1h-1zM199,116h1v1h-1zM199,122h1v1h-1zM207,116h1v1h-1zM207,122h1v1h-1zM215,116h1v1h-1zM215,122h1v1h-1zM223,116h1v1h-1zM223,122h1v1h-1zM231,116h1v1h-1zM231,122h1v1h-1zM239,116h1v1h-1zM239,122h1v1h-1zM247,116h1v1h-1zM247,122h1v1h-1zM255,116h1v1h-1zM255,122h1v1h-1zM263,116h1v1h-1zM263,122h1v1h-1zM271,116h1v1h-1zM271,122h1v1h-1zM279,116h1v1h-1zM279,122h1v1h-1zM287,116h1v1h-1zM287,122h1v1h-1zM295,116h1v1h-1zM295,122h1v1h-1zM303,116h1v1h-1zM303,122h1v1h-1zM311,116h1v1h-1zM311,122h1v1h-1zM319,116h1v1h-1zM319,122h1v1h-1zM327,116h1v1h-1zM327,122h1v1h-1zM335,116h1v1h-1zM335,122h1v1h-1zM343,116h1v1h-1zM343,122h1v1h-1zM351,116h1v1h-1zM351,122h1v1h-1zM359,116h1v1h-1zM359,122h1v1h-1zM367,116h1v1h-1zM367,122h1v1h-1zM375,116h1v1h-1zM375,122h1v1h-1zM383,116h1v1h-1zM383,122h1v1h-1zM391,116h1v1h-1zM391,122h1v1h-1zM399,116h1v1h-1zM399,122h1v1h-1zM407,116h1v1h-1zM407,122h1v1h-1zM415,116h1v1h-1zM415,122h1v1h-1zM423,116h1v1h-1zM423,122h1v1h-1zM431,116h1v1h-1zM431,122h1v1h-1zM439,116h1v1h-1zM439,122h1v1h-1zM447,116h1v1h-1zM447,122h1v1h-1zM455,116h1v1h-1zM455,122h1v1h-1zM463,116h1v1h-1zM463,122h1v1h-1zM471,116h1v1h-1zM471,122h1v1h-1zM479,116h1v1h-1zM479,122h1v1h-1zM487,116h1v1h-1zM487,122h1v1h-1zM495,116h1v1h-1zM495,122h1v1h-1zM503,116h1v1h-1zM503,122h1v1h-1zM511,116h1v1h-1zM511,122h1v1h-1zM519,116h1v1h-1zM519,122h1v1h-1zM527,116h1v1h-1zM527,122h1v1h-1zM535,116h1v1h-1zM535,122h1v1h-1zM543,116h1v1h-1zM543,122h1v1h-1zM551,116h1v1h-1zM551,122h1v1h-1zM559,116h1v1h-1zM559,122h1v1h-1zM567,116h1v1h-1zM567,122h1v1h-1zM575,116h1v1h-1zM575,122h1v1h-1zM583,116h1v1h-1zM583,122h1v1h-1zM591,116h1v1h-1zM591,122h1v1h-1zM599,116h1v1h-1zM599,122h1v1h-1zM607,116h1v1h-1zM607,122h1v1h-1zM615,116h1v1h-1zM615,122h1v1h-1zM623,116h1v1h-1zM623,122h1v1h-1zM631,116h1v1h-1zM631,122h1v1h-1zM639,116h1v1h-1zM639,122h1v1h-1zM647,116h1v1h-1zM647,122h1v1h-1zM655,116h1v1h-1zM655,122h1v1h-1zM663,116h1v1h-1zM663,122h1v1h-1zM671,116h1v1h-1zM671,122h1v1h-1zM679,116h1v1h-1zM679,122h1v1h-1zM687,116h1v1h-1zM687,122h1v1h-1zM695,116h1v1h-1zM695,122h1v1h-1zM703,116h1v1h-1zM703,122h1v1h-1zM711,116h1v1h-1zM711,122h1v1h-1zM719,116h1v1h-1zM719,122h1v1h-1zM727,116h1v1h-1zM727,122h1v1h-1zM735,116h1v1h-1zM735,122h1v1h-1zM743,116h1v1h-1zM743,122h1v1h-1zM751,116h1v1h-1zM751,122h1v1h-1zM759,116h1v1h-1zM759,122h1v1h-1zM767,116h1v1h-1zM767,122h1v1h-1zM775,116h1v1h-1zM775,122h1v1h-1zM783,116h1v1h-1zM783,122h1v1h-1zM791,116h1v1h-1zM791,122h1v1h-1zM799,116h1v1h-1zM799,122h1v1h-1zM807,116h1v1h-1zM807,122h1v1h-1zM815,116h1v1h-1zM815,122h1v1h-1zM823,116h1v1h-1zM823,122h1v1h-1zM831,116h1v1h-1zM831,122h1v1h-1zM839,116h1v1h-1zM839,122h1v1h-1zM847,116h1v1h-1zM847,122h1v1h-1zM855,116h1v1h-1zM855,122h1v1h-1zM863,116h1v1h-1zM863,122h1v1h-1zM871,116h1v1h-1zM871,122h1v1h-1zM879,116h1v1h-1zM879,122h1v1h-1zM887,116h1v1h-1zM887,122h1v1h-1zM895,116h1v1h-1zM895,122h1v1h-1zM903,116h1v1h-1zM903,122h1v1h-1zM911,116h1v1h-1zM911,122h1v1h-1zM919,116h1v1h-1zM919,122h1v1h-1zM927,116h1v1h-1zM927,122h1v1h-1zM935,116h1v1h-1zM935,122h1v1h-1zM943,116h1v1h-1zM943,122h1v1h-1z" fill="#0c0c78" opacity="0.6"/>
<text x="552.5" y="140" font-size="11" fill="#000" text-anchor="middle" textLength="122.7" lengthAdjust="spacingAndGlyphs" >RefSeq genes from NCBI</text>
<text x="152" y="155" font-size="13" fill="#0c0c78" text-anchor="end" textLength="91.5" lengthAdjust="spacingAndGlyphs" >RefSeq Curated</text>
<rect x="157" y="150" width="792" height="1" fill="#0c0c78" />
<text x="552.5" y="170.5" font-size="11" fill="#000" text-anchor="middle" textLength="214" lengthAdjust="spacingAndGlyphs" >Publications: Sequences in Scientific Articles</text>
<text x="152" y="186" font-size="13" fill="#000" text-anchor="end" >Sequences</text>
<text x="152" y="202" font-size="13" fill="#000" text-anchor="end" >SNPs</text>
<text x="552.5" y="219" font-size="13" fill="#005c00" text-anchor="middle" >OMIM Gene Phenotypes - Dark Green Can Be Disease-causing</text>
<text x="152" y="233" font-size="13" fill="#005c00" text-anchor="end" >OMIM Genes</text>
<rect x="156" y="221" width="793" height="15" fill="#005000" />
<text x="551.7" y="248.5" font-size="11" fill="#000" text-anchor="middle" textLength="231.5" lengthAdjust="spacingAndGlyphs" >Short Genetic Variants from dbSNP release 155</text>
<text x="152" y="264" font-size="13" fill="#000" text-anchor="end" textLength="126" lengthAdjust="spacingAndGlyphs" >Common dbSNP(155)</text>
<text x="552.5" y="281" font-size="13" fill="#000" text-anchor="middle" textLength="571" lengthAdjust="spacingAndGlyphs" >Gene Expression in 54 tissues from GTEx RNA-seq of 17382 samples, 948 donors (V8, Aug 2019)</text>
<text x="152" y="320" font-size="13" fill="#000" text-anchor="end" >NTN1</text>
<rect x="156" y="284" width="378" height="59" fill="#fff" />
<rect x="156.5" y="284.5" width="377" height="58" fill="none" stroke="#EAEAEA" stroke-width="1"/>
<rect x="156" y="312" width="5" height="30" fill="#FFA54F" />
<rect x="163" y="326" width="5" height="16" fill="#EE9A00" />
<rect x="170" y="338" width="5" height="4" fill="#8FBC8F" />
<rect x="177" y="288" width="5" height="54" fill="#8B1C62" />
<rect x="184" y="320" width="5" height="22" fill="#EE6A50" />
<rect x="191" y="294" width="5" height="48" fill="#FF0000" />
<rect x="198" y="307" width="5" height="35" fill="#CDB79E" />
<rect x="205" y="323" width="5" height="19" fill="#EEEE00" />
<rect x="212" y="324" width="5" height="18" fill="#EEEE00" />
<rect x="219" y="324" width="5" height="18" fill="#EEEE00" />
<rect x="226" y="324" width="5" height="18" fill="#EEEE00" />
<rect x="233" y="320" width="5" height="22" fill="#EEEE00" />
<rect x="240" y="325" width="5" height="17" fill="#EEEE00" />
<rect x="247" y="326" width="5" height="16" fill="#EEEE00" />
<rect x="254" y="324" width="5" height="18" fill="#EEEE00" />
<rect x="261" y="318" width="5" height="24" fill="#EEEE00" />
<rect x="268" y="322" width="5" height="20" fill="#EEEE00" />
<rect x="275" y="326" width="5" height="16" fill="#EEEE00" />
<rect x="282" y="321" width="5" height="21" fill="#EEEE00" />
<rect x="289" y="310" width="5" height="32" fill="#EEEE00" />
<rect x="296" y="315" width="5" height="27" fill="#00CDCD" />
<rect x="303" y="331" width="5" height="11" fill="#EE82EE" />
<rect x="310" y="338" width="5" height="4" fill="#9AC0CD" />
<rect x="317" y="308" width="5" height="34" fill="#EED5D2" />
<rect x="324" y="304" width="5" height="38" fill="#EED5D2" />
<rect x="331" y="301" width="5" height="41" fill="#CDB79E" />
<rect x="338" y="307" width="5" height="35" fill="#EEC591" />
<rect x="345" y="286" width="5" height="56" fill="#8B7355" />
<rect x="352" y="301" width="5" height="41" fill="#8B7355" />
<rect x="359" y="284" width="5" height="58" fill="#CDAA7D" />
<rect x="366" y="309" width="5" height="33" fill="#EED5D2" />
<rect x="373" y="290" width="5" height="52" fill="#B452CD" />
<rect x="380" y="318" width="5" height="24" fill="#7A378B" />
<rect x="387" y="329" width="5" height="13" fill="#CDB79E" />
<rect x="394" y="335" width="5" height="7" fill="#CDB79E" />
<rect x="401" y="321" width="5" height="21" fill="#CDB79E" />
<rect x="408" y="315" width="5" height="27" fill="#9ACD32" />
<rect x="415" y="305" width="5" height="37" fill="#CDB79E" />
<rect x="422" y="331" width="5" height="11" fill="#7A67EE" />
<rect x="429" y="305" width="5" height="37" fill="#FFD700" />
<rect x="436" y="333" width="5" height="9" fill="#FFB6C1" />
<rect x="443" y="331" width="5" height="11" fill="#CD9B1D" />
<rect x="450" y="320" width="5" height="22" fill="#B4EEB4" />
<rect x="457" y="315" width="5" height="27" fill="#D9D9D9" />
<rect x="464" y="312" width="5" height="30" fill="#3A5FCD" />
<rect x="471" y="309" width="5" height="33" fill="#1E90FF" />
<rect x="478" y="310" width="5" height="32" fill="#CDB79E" />
<rect x="485" y="339" width="5" height="3" fill="#CDB79E" />
<rect x="492" y="310" width="5" height="32" fill="#FFD39B" />
<rect x="499" y="314" width="5" height="28" fill="#A6A6A6" />
<rect x="506" y="322" width="5" height="20" fill="#008B45" />
<rect x="513" y="306" width="5" height="36" fill="#EED5D2" />
<rect x="520" y="312" width="5" height="30" fill="#EED5D2" />
<rect x="156" y="343" width="793" height="2" fill="#000080" />
<text x="551.3" y="360" font-size="13" fill="#000" text-anchor="middle" textLength="540.5" lengthAdjust="spacingAndGlyphs" >H3K27Ac Mark (Often Found Near Active Regulatory Elements) on 7 cell lines from ENCODE</text>
<text x="13" y="374" font-size="13" fill="#000" text-anchor="start" >Layered H3K27Ac</text>
<rect x="156" y="391" width="793" height="1" fill="#4a78c8" />
<text x="552.0" y="406" font-size="13" fill="#40408c" text-anchor="middle" >100 vertebrates Basewise Conservation by PhyloP</text>
<text x="152.4" y="405" font-size="13" fill="#40408c" text-anchor="end">4.88 <tspan dy="-1">_</tspan></text>
<text x="13" y="430" font-size="13" fill="#40408c" text-anchor="start" >100 Vert. Cons</text>
<text x="152.4" y="455" font-size="13" fill="#8c3c3c" text-anchor="end">-4.5 <tspan dy="-1">_</tspan></text>
<rect x="232" y="431" width="38" height="1" fill="#dcffdc" />
<rect x="248" y="431" width="6" height="2" fill="#00ff00" />
<rect x="430" y="426" width="38" height="1" fill="#00ff00" />
<rect x="446" y="426" width="6" height="8" fill="#00ff00" />
<rect x="760" y="426" width="38" height="1" fill="#00ff00" />
<rect x="776" y="426" width="6" height="8" fill="#00ff00" />
<rect x="826" y="430" width="38" height="1" fill="#c8ffc8" />
<rect x="842" y="430" width="6" height="3" fill="#00ff00" />
<rect x="892" y="430" width="38" height="1" fill="#c8ffc8" />
<rect x="908" y="430" width="6" height="3" fill="#00ff00" />
<rect x="303" y="430" width="9" height="1" fill="#0000ff" opacity="0.55"/>
<rect x="312" y="430" width="23" height="1" fill="#0000ff" opacity="0.3"/>
<rect x="335" y="430" width="6" height="1" fill="#0000ff" opacity="0.85"/>
<rect x="299" y="431" width="1" height="1" fill="#0000ff" opacity="0.4"/>
<rect x="300" y="431" width="7" height="1" fill="#0000ff" opacity="1.0"/>
<rect x="323" y="431" width="19" height="1" fill="#0000ff" opacity="0.25"/>
<rect x="301" y="432" width="6" height="1" fill="#0000ff" opacity="0.45"/>
<rect x="307" y="432" width="30" height="1" fill="#0000ff" opacity="0.3"/>
<rect x="337" y="432" width="6" height="1" fill="#0000ff" opacity="1.0"/>
<path d="M694.5,432.6 L700,432 L711,429.6 L719,429.6 L730,432.1 L735.5,432.7" stroke="#ff0000" stroke-width="1.7" fill="none"/>
<rect x="712" y="430" width="6" height="1" fill="#ffffff" opacity="0.85"/>
<rect x="710" y="431" width="10" height="1" fill="#ff0000" opacity="0.3"/>
<text x="552.5" y="472" font-size="13" fill="#000066" text-anchor="middle" textLength="214.5" lengthAdjust="spacingAndGlyphs" >Multiz Alignments of 100 Vertebrates</text>
<text x="152" y="486" font-size="13" fill="#e38200" text-anchor="end" >Gaps</text>
<text x="152" y="501" font-size="13" fill="#0c0c78" text-anchor="end" >Human</text>
<text x="152" y="516" font-size="13" fill="#0c0c78" text-anchor="end" >Rhesus</text>
<text x="152" y="531" font-size="13" fill="#006a00" text-anchor="end" >Mouse</text>
<text x="152" y="546" font-size="13" fill="#0c0c78" text-anchor="end" >Dog</text>
<text x="152" y="561" font-size="13" fill="#006a00" text-anchor="end" >Elephant</text>
<text x="152" y="576" font-size="13" fill="#006a00" text-anchor="end" >Chicken</text>
<text x="152" y="591" font-size="13" fill="#0c0c78" text-anchor="end" >X_tropicalis</text>
<text x="152" y="606" font-size="13" fill="#006a00" text-anchor="end" >Zebrafish</text>
<text x="187" y="501" font-size="13" fill="#00006e" text-anchor="middle" transform="matrix(1 0 0 1.08 0 -40.080)" >T</text>
<text x="253" y="501" font-size="13" fill="#00006e" text-anchor="middle" transform="matrix(1 0 0 1.08 0 -40.080)" >T</text>
<text x="319" y="501" font-size="13" fill="#00006e" text-anchor="middle" transform="matrix(1 0 0 1.08 0 -40.080)" >G</text>
<text x="385" y="501" font-size="13" fill="#00006e" text-anchor="middle" transform="matrix(1 0 0 1.08 0 -40.080)" >A</text>
<text x="451" y="501" font-size="13" fill="#00006e" text-anchor="middle" transform="matrix(1 0 0 1.08 0 -40.080)" >T</text>
<text x="517" y="501" font-size="13" fill="#00006e" text-anchor="middle" transform="matrix(1 0 0 1.08 0 -40.080)" >T</text>
<text x="583" y="501" font-size="13" fill="#00006e" text-anchor="middle" transform="matrix(1 0 0 1.08 0 -40.080)" >T</text>
<text x="649" y="501" font-size="13" fill="#00006e" text-anchor="middle" transform="matrix(1 0 0 1.08 0 -40.080)" >A</text>
<text x="715" y="501" font-size="13" fill="#00006e" text-anchor="middle" transform="matrix(1 0 0 1.08 0 -40.080)" >A</text>
<text x="781" y="501" font-size="13" fill="#00006e" text-anchor="middle" transform="matrix(1 0 0 1.08 0 -40.080)" >T</text>
<text x="847" y="501" font-size="13" fill="#00006e" text-anchor="middle" transform="matrix(1 0 0 1.08 0 -40.080)" >T</text>
<text x="914" y="501" font-size="13" fill="#00006e" text-anchor="middle" transform="matrix(1 0 0 1.08 0 -40.080)" >T</text>
<text x="187" y="516" font-size="13" fill="#00006e" text-anchor="middle" transform="matrix(1 0 0 1.08 0 -41.280)" >T</text>
<text x="253" y="516" font-size="13" fill="#00006e" text-anchor="middle" transform="matrix(1 0 0 1.08 0 -41.280)" >T</text>
<text x="319" y="516" font-size="13" fill="#00006e" text-anchor="middle" transform="matrix(1 0 0 1.08 0 -41.280)" >G</text>
<text x="385" y="516" font-size="13" fill="#00006e" text-anchor="middle" transform="matrix(1 0 0 1.08 0 -41.280)" >A</text>
<text x="451" y="516" font-size="13" fill="#00006e" text-anchor="middle" transform="matrix(1 0 0 1.08 0 -41.280)" >T</text>
<text x="517" y="516" font-size="13" fill="#00006e" text-anchor="middle" transform="matrix(1 0 0 1.08 0 -41.280)" >T</text>
<text x="583" y="516" font-size="13" fill="#00006e" text-anchor="middle" transform="matrix(1 0 0 1.08 0 -41.280)" >T</text>
<text x="649" y="516" font-size="13" fill="#00006e" text-anchor="middle" transform="matrix(1 0 0 1.08 0 -41.280)" >A</text>
<text x="715" y="516" font-size="13" fill="#00006e" text-anchor="middle" transform="matrix(1 0 0 1.08 0 -41.280)" >A</text>
<text x="781" y="516" font-size="13" fill="#00006e" text-anchor="middle" transform="matrix(1 0 0 1.08 0 -41.280)" >T</text>
<text x="847" y="516" font-size="13" fill="#00006e" text-anchor="middle" transform="matrix(1 0 0 1.08 0 -41.280)" >T</text>
<text x="914" y="516" font-size="13" fill="#00006e" text-anchor="middle" transform="matrix(1 0 0 1.08 0 -41.280)" >T</text>
<text x="187" y="532" font-size="11" fill="#8c8cb4" text-anchor="middle" >=</text>
<text x="253" y="532" font-size="11" fill="#8c8cb4" text-anchor="middle" >=</text>
<text x="319" y="532" font-size="11" fill="#8c8cb4" text-anchor="middle" >=</text>
<text x="385" y="532" font-size="11" fill="#8c8cb4" text-anchor="middle" >=</text>
<text x="451" y="532" font-size="11" fill="#8c8cb4" text-anchor="middle" >=</text>
<text x="517" y="532" font-size="11" fill="#8c8cb4" text-anchor="middle" >=</text>
<text x="583" y="532" font-size="11" fill="#8c8cb4" text-anchor="middle" >=</text>
<text x="649" y="532" font-size="11" fill="#8c8cb4" text-anchor="middle" >=</text>
<text x="715" y="532" font-size="11" fill="#8c8cb4" text-anchor="middle" >=</text>
<text x="781" y="532" font-size="11" fill="#8c8cb4" text-anchor="middle" >=</text>
<text x="847" y="532" font-size="11" fill="#8c8cb4" text-anchor="middle" >=</text>
<text x="914" y="532" font-size="11" fill="#8c8cb4" text-anchor="middle" >=</text>
<text x="187" y="545" font-size="11" fill="#8c8cb4" text-anchor="middle" >-</text>
<text x="253" y="545" font-size="11" fill="#8c8cb4" text-anchor="middle" >-</text>
<text x="319" y="545" font-size="11" fill="#8c8cb4" text-anchor="middle" >-</text>
<text x="385" y="545" font-size="11" fill="#8c8cb4" text-anchor="middle" >-</text>
<text x="451" y="546" font-size="13" fill="#00006e" text-anchor="middle" transform="matrix(1 0 0 1.08 0 -43.680)" >T</text>
<text x="517" y="546" font-size="13" fill="#00006e" text-anchor="middle" transform="matrix(1 0 0 1.08 0 -43.680)" >T</text>
<text x="583" y="546" font-size="13" fill="#00006e" text-anchor="middle" transform="matrix(1 0 0 1.08 0 -43.680)" >T</text>
<text x="649" y="546" font-size="13" fill="#00006e" text-anchor="middle" transform="matrix(1 0 0 1.08 0 -43.680)" >A</text>
<text x="715" y="546" font-size="13" fill="#00006e" text-anchor="middle" transform="matrix(1 0 0 1.08 0 -43.680)" >A</text>
<text x="781" y="546" font-size="13" fill="#00006e" text-anchor="middle" transform="matrix(1 0 0 1.08 0 -43.680)" >T</text>
<text x="847" y="546" font-size="13" fill="#00006e" text-anchor="middle" transform="matrix(1 0 0 1.08 0 -43.680)" >T</text>
<text x="914" y="546" font-size="13" fill="#8c8cb4" text-anchor="middle" transform="matrix(1 0 0 1.08 0 -43.680)" >A</text>
<text x="187" y="561" font-size="13" fill="#00006e" text-anchor="middle" transform="matrix(1 0 0 1.08 0 -44.880)" >T</text>
<text x="253" y="561" font-size="13" fill="#00006e" text-anchor="middle" transform="matrix(1 0 0 1.08 0 -44.880)" >T</text>
<text x="319" y="561" font-size="13" fill="#00006e" text-anchor="middle" transform="matrix(1 0 0 1.08 0 -44.880)" >G</text>
<text x="385" y="561" font-size="13" fill="#8c8cb4" text-anchor="middle" transform="matrix(1 0 0 1.08 0 -44.880)" >T</text>
<text x="451" y="561" font-size="13" fill="#00006e" text-anchor="middle" transform="matrix(1 0 0 1.08 0 -44.880)" >T</text>
<text x="517" y="561" font-size="13" fill="#8c8cb4" text-anchor="middle" transform="matrix(1 0 0 1.08 0 -44.880)" >C</text>
<text x="583" y="561" font-size="13" fill="#00006e" text-anchor="middle" transform="matrix(1 0 0 1.08 0 -44.880)" >T</text>
<text x="649" y="561" font-size="13" fill="#00006e" text-anchor="middle" transform="matrix(1 0 0 1.08 0 -44.880)" >A</text>
<text x="715" y="561" font-size="13" fill="#00006e" text-anchor="middle" transform="matrix(1 0 0 1.08 0 -44.880)" >A</text>
<text x="781" y="561" font-size="13" fill="#00006e" text-anchor="middle" transform="matrix(1 0 0 1.08 0 -44.880)" >T</text>
<text x="847" y="561" font-size="13" fill="#00006e" text-anchor="middle" transform="matrix(1 0 0 1.08 0 -44.880)" >T</text>
<text x="914" y="561" font-size="13" fill="#00006e" text-anchor="middle" transform="matrix(1 0 0 1.08 0 -44.880)" >T</text>
<text x="187" y="577" font-size="11" fill="#8c8cb4" text-anchor="middle" >=</text>
<text x="253" y="577" font-size="11" fill="#8c8cb4" text-anchor="middle" >=</text>
<text x="319" y="577" font-size="11" fill="#8c8cb4" text-anchor="middle" >=</text>
<text x="385" y="577" font-size="11" fill="#8c8cb4" text-anchor="middle" >=</text>
<text x="451" y="577" font-size="11" fill="#8c8cb4" text-anchor="middle" >=</text>
<text x="517" y="577" font-size="11" fill="#8c8cb4" text-anchor="middle" >=</text>
<text x="583" y="577" font-size="11" fill="#8c8cb4" text-anchor="middle" >=</text>
<text x="649" y="577" font-size="11" fill="#8c8cb4" text-anchor="middle" >=</text>
<text x="715" y="577" font-size="11" fill="#8c8cb4" text-anchor="middle" >=</text>
<text x="781" y="577" font-size="11" fill="#8c8cb4" text-anchor="middle" >=</text>
<text x="847" y="577" font-size="11" fill="#8c8cb4" text-anchor="middle" >=</text>
<text x="914" y="577" font-size="11" fill="#8c8cb4" text-anchor="middle" >=</text>
<text x="552.5" y="622" font-size="13" fill="#000" text-anchor="middle" >Repeating Elements by RepeatMasker</text>
<text x="152" y="636" font-size="13" fill="#000" text-anchor="end" >RepeatMasker</text>
<rect x="156" y="624" width="793" height="15" fill="#000" /></svg></body></html>
